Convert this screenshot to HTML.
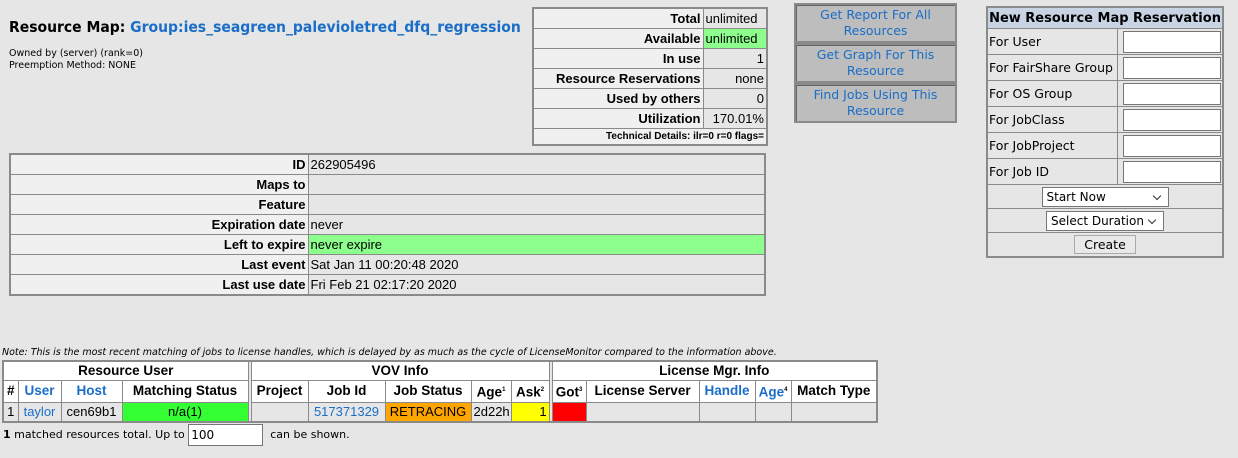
<!DOCTYPE html>
<html><head><meta charset="utf-8"><style>
body{margin:0;width:1238px;height:458px;background:#e6e6e6;font-family:"Liberation Sans",sans-serif;font-size:13px;color:#000;position:relative;overflow:hidden}
a{color:#1a6ec8;text-decoration:none}
.abs{position:absolute}
table{border-collapse:collapse;table-layout:fixed}
td{border:1px solid #8a8a8a;padding:0 2px;white-space:nowrap;overflow:hidden;line-height:19px}
.t{border:2px solid #8a8a8a}
.l{background:#f0f0f0;font-weight:bold;text-align:right}
.v{background:#e6e6e6}
.g{background:#8cff8c}
.btn{position:absolute;left:794px;width:159px;height:36px;padding-top:0;border:2px solid #8a8a8a;background:#bdbdbd;font-family:"DejaVu Sans",sans-serif;font-size:12.5px;text-align:center;line-height:16px;box-shadow:inset 1px 1px 0 #666;display:flex;align-items:center;justify-content:center}
.inp{display:inline-block;background:#fff;border:1px solid #767676;height:20px;vertical-align:middle}
.sel{display:inline-block;background:#fff;border:1px solid #767676;height:18px;line-height:18px;font-family:"DejaVu Sans",sans-serif;font-size:12px;text-align:left;padding-left:4px;position:relative}
.sel:after{content:"";position:absolute;right:8px;top:5px;width:5px;height:5px;border-right:1px solid #333;border-bottom:1px solid #333;transform:rotate(45deg)}
.rs td{font-family:"DejaVu Sans",sans-serif;font-size:12.5px;height:25px;padding:0 1px}
.bt td{height:18px;text-align:center;line-height:18px}
.bt .h td{font-weight:bold;font-size:13.5px}
</style></head><body>

<div class="abs" style="left:9px;top:18px;font-size:15.5px;font-weight:bold;font-family:'DejaVu Sans Condensed','Liberation Sans',sans-serif">Resource Map: <a href="#">Group:ies_seagreen_palevioletred_dfq_regression</a></div>
<div class="abs" style="left:9px;top:48px;font-size:9.5px;font-family:'DejaVu Sans',sans-serif;line-height:12px">Owned by (server) (rank=0)<br>Preemption Method: NONE</div>

<table class="t abs" style="left:532px;top:7px;width:234px">
<col style="width:170px"><col style="width:64px">
<tr><td class="l">Total</td><td class="v">unlimited</td></tr>
<tr><td class="l">Available</td><td class="g">unlimited</td></tr>
<tr><td class="l">In use</td><td class="v" style="text-align:right">1</td></tr>
<tr><td class="l">Resource Reservations</td><td class="v" style="text-align:right">none</td></tr>
<tr><td class="l">Used by others</td><td class="v" style="text-align:right">0</td></tr>
<tr><td class="l">Utilization</td><td class="v" style="text-align:right">170.01%</td></tr>
<tr><td colspan="2" class="l" style="font-size:10px;line-height:15px">Technical Details: ilr=0 r=0 flags=</td></tr>
</table>

<div class="btn" style="top:3px"><a href="#">Get Report For All<br>Resources</a></div>
<div class="btn" style="top:43px"><a href="#">Get Graph For This<br>Resource</a></div>
<div class="btn" style="top:83px"><a href="#">Find Jobs Using This<br>Resource</a></div>

<table class="t abs rs" style="left:986px;top:6px;width:236px">
<col style="width:130px"><col style="width:106px">
<tr><td colspan="2" style="background:#c8d4e4;font-weight:bold;text-align:center;height:20px;font-size:13px">New Resource Map Reservation</td></tr>
<tr><td>For User</td><td style="text-align:right"><span class="inp" style="width:96px"></span></td></tr>
<tr><td>For FairShare Group</td><td style="text-align:right"><span class="inp" style="width:96px"></span></td></tr>
<tr><td>For OS Group</td><td style="text-align:right"><span class="inp" style="width:96px"></span></td></tr>
<tr><td>For JobClass</td><td style="text-align:right"><span class="inp" style="width:96px"></span></td></tr>
<tr><td>For JobProject</td><td style="text-align:right"><span class="inp" style="width:96px"></span></td></tr>
<tr><td>For Job ID</td><td style="text-align:right"><span class="inp" style="width:96px"></span></td></tr>
<tr><td colspan="2" style="text-align:center;height:23px"><span class="sel" style="width:121px">Start Now</span></td></tr>
<tr><td colspan="2" style="text-align:center;height:23px"><span class="sel" style="width:112px">Select Duration</span></td></tr>
<tr><td colspan="2" style="text-align:center;height:23px"><span style="display:inline-block;border:1px solid #aaa;background:#e9e9e9;padding:0 9px;line-height:17px">Create</span></td></tr>
</table>

<table class="t abs" style="left:9px;top:153px;width:757px">
<col style="width:298px"><col>
<tr><td class="l">ID</td><td class="v">262905496</td></tr>
<tr><td class="l">Maps to</td><td class="v"></td></tr>
<tr><td class="l">Feature</td><td class="v"></td></tr>
<tr><td class="l">Expiration date</td><td class="v">never</td></tr>
<tr><td class="l">Left to expire</td><td class="g">never expire</td></tr>
<tr><td class="l">Last event</td><td class="v">Sat Jan 11 00:20:48 2020</td></tr>
<tr><td class="l">Last use date</td><td class="v">Fri Feb 21 02:17:20 2020</td></tr>
</table>

<div class="abs" style="left:2px;top:347px;font-size:9.5px;font-style:italic;font-family:'DejaVu Sans',sans-serif">Note: This is the most recent matching of jobs to license handles, which is delayed by as much as the cycle of LicenseMonitor compared to the information above.</div>

<table class="t abs bt" style="left:2px;top:360px;width:876px">
<col style="width:15px"><col style="width:43px"><col style="width:61px"><col style="width:126px"><col style="width:3px">
<col style="width:57px"><col style="width:77px"><col style="width:86px"><col style="width:40px"><col style="width:38px"><col style="width:3px">
<col style="width:34px"><col style="width:113px"><col style="width:56px"><col style="width:36px"><col>
<tr class="h"><td colspan="4" style="background:#fff">Resource User</td><td rowspan="3" style="padding:0"></td><td colspan="5" style="background:#fff">VOV Info</td><td rowspan="3" style="padding:0"></td><td colspan="5" style="background:#fff">License Mgr. Info</td></tr>
<tr class="h"><td style="background:#fff;padding:0">#</td><td style="background:#fff"><a href="#">User</a></td><td style="background:#fff"><a href="#">Host</a></td><td style="background:#fff">Matching Status</td><td style="background:#fff">Project</td><td style="background:#fff">Job Id</td><td style="background:#fff">Job Status</td><td style="background:#fff">Age<sup style="font-size:6px">1</sup></td><td style="background:#fff">Ask<sup style="font-size:6px">2</sup></td><td style="background:#fff">Got<sup style="font-size:6px">3</sup></td><td style="background:#fff">License Server</td><td style="background:#fff"><a href="#">Handle</a></td><td style="background:#fff"><a href="#">Age</a><sup style="font-size:6px">4</sup></td><td style="background:#fff">Match Type</td></tr>
<tr><td style="padding:0">1</td><td><a href="#">taylor</a></td><td>cen69b1</td><td style="background:#33ff33">n/a(1)</td><td></td><td><a href="#">517371329</a></td><td style="background:#ffa500">RETRACING</td><td>2d22h</td><td style="background:#ffff00;text-align:right">1</td><td style="background:#ff0000"></td><td></td><td></td><td></td><td></td></tr>
</table>

<div class="abs" style="left:3px;top:424px;font-size:11px;font-family:'DejaVu Sans',sans-serif;line-height:14px"><b>1</b> matched resources total. Up to <span style="display:inline-block;width:75px;height:22px;background:#fff;border:1px solid #767676;vertical-align:middle;font-size:12px;line-height:20px;padding-left:2px;box-sizing:border-box">100</span> &nbsp;can be shown.</div>

</body></html>
